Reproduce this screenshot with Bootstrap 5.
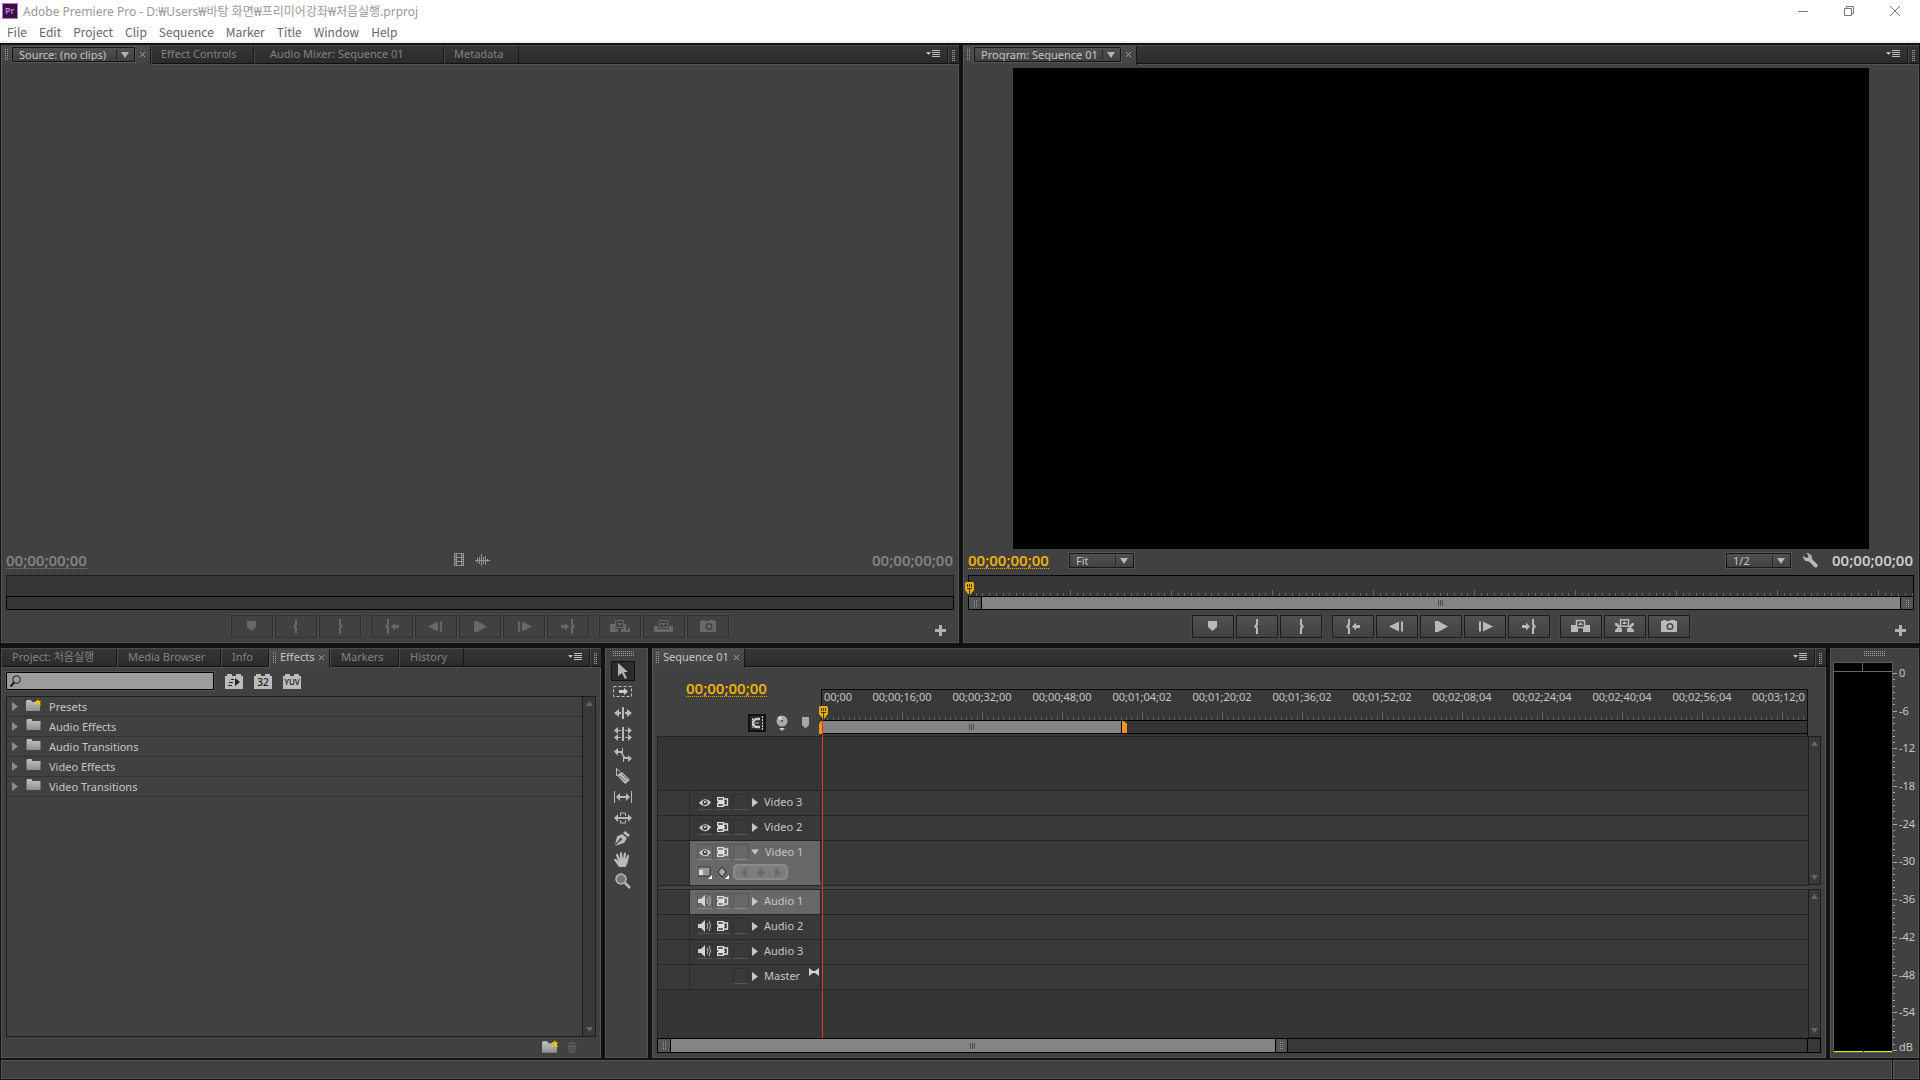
<!DOCTYPE html>
<html lang="ko">
<head>
<meta charset="utf-8">
<meta name="viewport" content="width=device-width, initial-scale=1">
<title>Adobe Premiere Pro</title>
<link rel="stylesheet" href="https://cdn.jsdelivr.net/npm/bootstrap@5.3.0/dist/css/bootstrap.min.css">
<style>
:root{--ui:#414141;--edge:#545454;--ink:#c6c6c6;--dim:#828282;--well:#363636;--gold:#f8b500}
body{background:#121212;color:var(--ink);font:11px/14px "Noto Sans","Noto Sans CJK KR",sans-serif;min-height:100vh}
svg{display:block;flex:none}
button,select,input{font:inherit;color:inherit}
.min0{min-width:0;min-height:0}
/* window chrome */
.chrome{background:#fff;color:#666;height:43px;border-bottom:2px solid #eef0ee;line-height:16px;font-size:12px}
.titlebar{height:22px;color:#999;padding:0 20px 0 2px}
.apptitle{margin:2px auto 0 5px}
.menus{height:20px;gap:12px;padding-left:7px;font-family:"Noto Sans CJK KR",sans-serif}
.menus a{color:#666;text-decoration:none}
.winbtns{gap:36px}
.winbtn{padding:0;border:0;color:#777}
/* panels */
.workspace{padding:2px 1px 1px}
.toprow{flex:598 1 0;gap:4px;margin-bottom:5px}
.botrow{flex:410 1 0;gap:4px;margin-bottom:2px}
.mon-l{flex:958 1 0}.mon-r{flex:956 1 0}
.panel{background:var(--ui);border:1px solid var(--edge);border-top-color:#4c4c4c}
.strip{height:18px;background:linear-gradient(#363636,#2a2a2a);box-shadow:inset 0 -1px #111;margin:0 -1px}
.tabx{border:0;border-radius:0;background:none;color:var(--dim);border-right:1px solid #161616;box-shadow:inset 1px 0 #484848,inset 0 -1px #111;padding:0 10px 2px;white-space:nowrap;font-size:11px;line-height:14px;text-align:left}
.fx .tabx{padding-left:11px}
.tabon{background:linear-gradient(#4c4c4c,#424242);color:var(--ink);border-right:1px solid #161616;box-shadow:inset 1px 0 #5a5a5a;height:19px;position:relative;padding:0 4px 2px;gap:4px;white-space:nowrap}
.tabon span{margin-bottom:2px}
.strip .tailgrip{border-left:1px solid #161616;width:12px;box-shadow:inset 1px 0 #484848}
.menuico{margin:0 7px 2px auto}
.body-x{border-top:1px solid #525252}
.grip{flex:none;width:3px;height:11px;background:linear-gradient(90deg,transparent 1px,#434343 1px) 0 0/2px 2px,linear-gradient(#a0a0a0 1px,transparent 1px) 0 0/2px 2px}
.grip.wide{width:21px;height:5px}
.grip.low{height:7px}
.closex{border:0;background:none;padding:0;color:#a5a5a5}
.pick{position:relative;display:block;border:1px solid #161616;outline:1px solid #555;outline-offset:0;background:linear-gradient(#505050,#414141);height:15px}
.pick select{appearance:none;border:0;border-radius:0;background:none;padding:0 0 0 6px;width:100%;height:13px;line-height:13px;display:block;color:var(--ink);outline:0}
.pick::before{content:"";position:absolute;right:17px;top:2px;bottom:2px;width:1px;background:#222}
.pick::after{content:"";position:absolute;right:5px;top:4px;border:4px solid transparent;border-top:6px solid #b4b4b4;border-bottom:0;pointer-events:none}
.pick.src{width:123px}.pick.prg{width:147px}.pick.sm{width:65px}
.tc{font-family:"Open Sans",sans-serif;font-weight:600;font-size:15px;line-height:16px;border-bottom:1px dotted transparent;white-space:nowrap}
.tc.dimt{color:#858585}.tc.dots{border-bottom-color:currentColor}.tc.gold{color:var(--gold)}.tc.lite{color:#d2d2d2}
.tc.endtc{padding:0 1px 0 2px}
.monitor{padding:0 4px 4px}
.stage{padding-top:3px;flex:1 1 0}
.frame{height:100%;aspect-ratio:16/9;background:#000}
.tcrow{height:22px;margin-bottom:4px}
.fitpick{margin:0 auto 0 20px}
.scrub{height:35px;margin-bottom:5px;position:relative}
.scrub .r1{height:22px;background:#373737;border:1px solid #1e1e1e;border-bottom-color:#000}
.scrub .r2{height:13px;border:1px solid #000;border-top:0;background:#373737}
.scrub.live .r1{border-color:#000}
.hand{flex:none;width:13px;background:#555;border-right:1px solid #000}
.hand.rt{border-right:0;border-left:1px solid #000}
.thumb{background:#848484;flex:1}
.transport{display:grid;grid-template-columns:1fr auto 1fr;height:23px}
.tbtn{width:42px;height:23px;padding:0;border:1px solid #1b1b1b;border-radius:0;background:linear-gradient(#515151,#414141);color:#b9b9b9;box-shadow:0 0 0 1px #484848;display:flex;align-items:center;justify-content:center}
.off .tbtn{background:var(--ui);border-color:#303030;color:#686868}
.grp{gap:2px}.grps{gap:10px}
.plus{border:0;background:none;padding:0;margin-right:8px;color:#b0b0b0}
.head-ph{position:absolute;left:-3px;top:7px}
/* effects */
.fx{flex:0 1 600px}.tools{flex:0 0 43px}.seq{flex:1 1 1174px}.meter{flex:0 0 89px}
.fxbar{margin-bottom:6px}
.searchbox{width:208px;height:18px;background:#9c9c9c;border:1px solid #000;outline:1px solid #505050;padding-left:3px}
.searchbox input{border:0;background:none;outline:0;width:100%;height:14px;padding:0 4px;color:#111}
.fxicons{gap:11px;margin-left:11px}
.flat{border:0;background:none;padding:0;color:#b9b9b9}
.tree{border:1px solid #1e1e1e;background:var(--ui)}
.tree li{height:20px;border-bottom:1px solid #323232;padding-left:5px}
.tree li svg:nth-child(2){margin-bottom:3px}
.vbar{width:13px;background:#393939;border-left:1px solid #1c1c1c;color:#666;padding:4px 0}
.fxfoot{height:20px;gap:8px;padding-right:18px}
.toolgrip{margin:2px 6px 5px 0}
.toolcol{margin-right:8px}
.tools .flat{width:24px;height:21px;display:flex;align-items:center;justify-content:center}
.tools .flat.sel{background:#2c2c2c;border:1px solid #111;height:20px}
/* timeline */
.gutter-l{flex:0 0 164px}
.seqtc{padding:12px 0 0 29px}
.seqicons{gap:7px;padding-right:8px}
.seqbody{padding-left:4px}
.rulerx{background:#383838;border:1px solid #0c0c0c;border-bottom:0;margin-top:21px;height:47px}
.labels{height:16px;overflow:hidden}
.labels span{flex:0 0 80px;text-align:center;white-space:nowrap}
.labels span:first-child{flex-basis:40px;text-align:left;padding-left:2px}
.labels span:last-child{flex-basis:64px;text-align:left;padding-left:10px}
.work{height:14px;border-top:1px solid #000;border-bottom:1px solid #000;background:#353535}
.workarea{flex:0 0 300px;background:#848484;border-right:1px solid #000}
.wa-in{position:absolute;left:-3px;top:31px}
.ph-seq{position:absolute;left:-3px;top:16px}
.tracks{background:#353535;border-top:1px solid #232323;border-left:1px solid #232323;position:relative}
.pane{flex:1 1 0}
.trk{height:25px;background:#393939;border-bottom:1px solid #252525;flex:none}
.trk.first{box-shadow:0 -1px #252525}
.trk.tall{height:45px}
.tgut{flex:0 0 32px;border-right:1px solid #2a2a2a}
.thead{flex:0 0 131px;border-right:1px solid #252525;padding:0 0 2px 7px;gap:2px}
.thead .cellb{margin-top:1px}
.seld .thead{width:131px;height:24px}
.seld .thead.sub{height:17px}
.arrow{margin:1px 4px 0 1px}
.arrow.dn{margin:1px 4px 0 0}
.mixico{margin:0 0 8px 7px}
.seld{background:#686868}
.cellb{width:16px;height:16px;border:1px solid #303030;border-bottom-color:#555;background:none;padding:0;color:#dcdcdc;display:flex;align-items:center;justify-content:center}
.seld .cellb{border-color:#555;border-bottom-color:#858585}
.nobox{border-color:transparent!important}
.pill{width:55px;height:16px;border-radius:5px;background:#7c7c7c;box-shadow:inset 0 0 3px 1px #969696;color:#6a6a6a}
.split{height:4px;background:#444;flex:none}
.redline{position:absolute;left:164px;top:-17px;bottom:0;width:1px;background:#e03818}
.hbar{height:15px;border:1px solid #000;background:#383838;margin-right:4px}
.hbar .thumb{flex:0 0 604px}
.hbar .hand.rt{border-right:1px solid #000}
.corner{width:13px;border-left:1px solid #000}
.vcol{flex:0 0 17px}
.vcol .vbar{border:1px solid #1c1c1c;flex:1;width:13px}
/* levels */
.levels{width:60px;background:#000;border:1px solid #5c5c5c}
.peak{height:9px;border-bottom:1px solid #666}
.peak span{border-right:1px solid #666}
.floorline{gap:1px;height:1px}
.floorline span{background:#e8e800;flex:1}
.metergrip{margin:2px 0 6px}
.meterrow{padding:0 0 4px 2px}
.scaleL{line-height:12px;margin:5px 0 0 1px}
.scaleL span:last-child{margin-top:-3px}
.status{height:19px;gap:1px}
.status div{background:#404040;border:1px solid #555}
.status .sbend{width:26px}
</style>
<script src="https://cdn.jsdelivr.net/npm/bootstrap@5.3.0/dist/js/bootstrap.bundle.min.js"></script>
</head>
<body class="d-flex flex-column m-0">
<svg width="0" height="0" class="position-absolute">
<defs>
<pattern id="tk101" width="101" height="6" patternUnits="userSpaceOnUse"><path fill="#686868" d="M0 0h1v6h-1zM7 3h1v3h-1zM13 3h1v3h-1zM20 3h1v3h-1zM27 3h1v3h-1zM34 3h1v3h-1zM40 3h1v3h-1zM47 3h1v3h-1zM54 3h1v3h-1zM61 3h1v3h-1zM67 3h1v3h-1zM74 3h1v3h-1zM81 3h1v3h-1zM88 3h1v3h-1zM94 3h1v3h-1z"/></pattern>
<pattern id="tk80" width="80" height="8" patternUnits="userSpaceOnUse"><path fill="#646464" d="M0 0h1v8h-1zM5 5h1v3h-1zM11 5h1v3h-1zM16 5h1v3h-1zM21 5h1v3h-1zM27 5h1v3h-1zM32 5h1v3h-1zM37 5h1v3h-1zM43 5h1v3h-1zM48 5h1v3h-1zM53 5h1v3h-1zM59 5h1v3h-1zM64 5h1v3h-1zM69 5h1v3h-1zM75 5h1v3h-1z"/></pattern>
<linearGradient id="gf" x2="0" y2="1"><stop stop-color="#c4c4c4"/><stop offset="1" stop-color="#8e8e8e"/></linearGradient>
</defs>
<symbol id="i-x" viewBox="0 0 7 7"><path d="M1 1l5 5M6 1l-5 5" stroke="currentColor" fill="none"/></symbol>
<symbol id="i-menu" viewBox="0 0 14 8"><path d="M0 2h5l-2.500 3zM6 0h8v1h-8zM6 2h8v1h-8zM6 4h8v1h-8zM6 6h8v1h-8z" fill="#bdbdbd"/></symbol>
<symbol id="i-mark" viewBox="0 0 20 16"><path d="M5 2h9v6l-4.500 4-4.500-4z" fill="currentColor"/></symbol>
<symbol id="i-in" viewBox="0 0 20 16"><path d="M9 0h2v6l-1 1.500 1 1.500v6h-2v-5l-2-2.500 2-2.500z" fill="currentColor"/></symbol>
<symbol id="i-out" viewBox="0 0 20 16"><path d="M11 0h-2v6l1 1.500-1 1.500v6h2v-5l2-2.500-2-2.500z" fill="currentColor"/></symbol>
<symbol id="i-goin" viewBox="0 0 20 16"><path d="M5 0h2v6l-1 1.500 1 1.500v6h-2v-5l-2-2.500 2-2.500zM9 7.500l4-4v2.500h4v3h-4v2.500z" fill="currentColor"/></symbol>
<symbol id="i-goout" viewBox="0 0 20 16"><path d="M15 0h-2v6l1 1.500-1 1.500v6h2v-5l2-2.500-2-2.500zM11 7.500l-4-4v2.500h-4v3h4v2.500z" fill="currentColor"/></symbol>
<symbol id="i-back" viewBox="0 0 20 16"><path d="M2 7.500l10-5v10zM14 2.500h2v10h-2z" fill="currentColor"/></symbol>
<symbol id="i-fwd" viewBox="0 0 20 16"><path d="M18 7.500l-10-5v10zM4 2.500h2v10h-2z" fill="currentColor"/></symbol>
<symbol id="i-play" viewBox="0 0 20 16"><path d="M4 2h3l10 5.500-10 5.500h-3z" fill="currentColor"/></symbol>
<symbol id="i-insert" viewBox="0 0 20 16"><path d="M0 5h5v5h3v3h-8zM11 10h3v-5h1l5 4v4h-9zM16 6v6l3-3z" fill="currentColor" fill-rule="evenodd"/><path d="M5.500 1.500h8v7h-8z" fill="none" stroke="currentColor"/><path d="M7 4h5l-2.500 3z" fill="currentColor"/></symbol>
<symbol id="i-over" viewBox="0 0 20 16"><path d="M0 7h4v3h11v-3h4v6h-19z" fill="currentColor"/><path d="M5.500 1.500h8v7h-8z" fill="none" stroke="currentColor"/><path d="M7 4h5l-2.500 3z" fill="currentColor"/></symbol>
<symbol id="i-lift" viewBox="0 0 20 16"><path d="M0 6h5v3h2v4h-7zM12 9h2v-3h5v7h-7z" fill="currentColor"/><path d="M5.500 1.500h8v7h-8z" fill="none" stroke="currentColor" stroke-width="1.500"/><path d="M7 6h5l-2.500-3z" fill="currentColor"/></symbol>
<symbol id="i-extract" viewBox="0 0 20 16"><path d="M0 4h2l3 3v2h2v4h-7v-2l3-2.500-3-2.500zM12 9h2v-2l3-3h2v2l-3 2.500 3 2.500v2h-7z" fill="currentColor"/><path d="M5.500 .750h8v6.500h-8z" fill="none" stroke="currentColor" stroke-width="1.500"/><path d="M7 5h5l-2.500-3z" fill="currentColor"/></symbol>
<symbol id="i-cam" viewBox="0 0 20 16"><path d="M2 2h2v-1h3v1h4v-1h5v1h2v11h-16zM11 4a3.500 3.500 0 100 7 3.500 3.500 0 000-7zM11 5.500a2 2 0 110 4 2 2 0 010-4z" fill="currentColor" fill-rule="evenodd"/></symbol>
<symbol id="i-plus" viewBox="0 0 11 11"><path d="M4 0h3v4h4v3h-4v4h-3v-4h-4v-3h4z" fill="currentColor"/></symbol>
<symbol id="i-ph" viewBox="0 0 9 13"><path d="M1 0h7l1 1v7l-4 5h-1l-4-5v-7z" fill="#e6ab0c"/><path d="M2 2h1v3h-1zM4 2h1v3h-1zM6 2h1v3h-1zM2 6h5v1h-5zM4 6h1v7h-1z" fill="#4a3400"/></symbol>
<symbol id="i-grip3" viewBox="0 0 6 6"><path d="M0 0h1v6h-1zM2 0h1v6h-1zM4 0h1v6h-1z" fill="#4d4d4d"/></symbol>
<symbol id="i-folder" viewBox="0 0 14 12"><path d="M0 1l1-1h4l1 2h8v9h-14z" fill="url(#gf)"/></symbol>
<symbol id="i-folderstar" viewBox="0 0 15 13"><path d="M0 2l1-1h4l1 2h8v9h-14z" fill="url(#gf)"/><path d="M12 0l1 2h2l-1 2 1 2.500-3-1-3 1 1-2.500-1-2h2z" fill="#f2c200"/></symbol>
<symbol id="i-tri" viewBox="0 0 6 9"><path d="M0 0l6 4.500-6 4.500z" fill="currentColor"/></symbol>
<symbol id="i-up" viewBox="0 0 7 5"><path d="M0 5h7l-3.500-5z" fill="currentColor"/></symbol>
<symbol id="i-down" viewBox="0 0 7 5"><path d="M0 0h7l-3.500 5z" fill="currentColor"/></symbol>
<symbol id="i-eye" viewBox="0 0 12 9"><path d="M0 5q6-7 12-1-5 8-12 1z" fill="#d2d2d2"/><circle cx="6" cy="4.500" r="2.600" fill="#444"/><circle cx="6" cy="4" r="1" fill="#eee"/></symbol>
<symbol id="i-sync" viewBox="0 0 12 10"><path d="M.5.500h6v3h-6zM.5 6.500h6v3h-6zM1 5h7M7 2h3.500v6h-3.500" fill="none" stroke="#dedede" stroke-width="1.300"/></symbol>
<symbol id="i-spk" viewBox="0 0 14 12"><path d="M0 4h3l4-4v12l-4-4h-3z" fill="#d2d2d2"/><path d="M9 3q2 3 0 6M11 1q3 5 0 10" stroke="#b8b8b8" fill="none"/></symbol>
</svg>

<header class="chrome">
 <div class="titlebar d-flex align-items-center">
  <svg width="16" height="16" viewBox="0 0 16 16"><rect width="16" height="16" fill="#c06ad8"/><rect x="1" y="1" width="14" height="14" fill="#35123f"/><text x="3" y="11" font-size="9" font-family="Open Sans" font-weight="600" fill="#e07cff">Pr</text></svg>
  <span class="apptitle">Adobe Premiere Pro - D:₩Users₩바탕 화면₩프리미어강좌₩처음실행.prproj</span>
  <div class="d-flex winbtns">
   <button class="btn winbtn" aria-label="Minimize"><svg width="10" height="10"><path d="M0 5.500h10" stroke="currentColor"/></svg></button>
   <button class="btn winbtn" aria-label="Restore"><svg width="10" height="10" fill="none" stroke="currentColor"><path d="M.5 2.500h7v7h-7zM2.500 2.500v-2h7v7h-2"/></svg></button>
   <button class="btn winbtn" aria-label="Close"><svg width="10" height="10" stroke="currentColor"><path d="M0 0l10 10M10 0l-10 10"/></svg></button>
  </div>
 </div>
 <nav class="menus d-flex align-items-center"><a href="#">File</a><a href="#">Edit</a><a href="#">Project</a><a href="#">Clip</a><a href="#">Sequence</a><a href="#">Marker</a><a href="#">Title</a><a href="#">Window</a><a href="#">Help</a></nav>
</header>

<main class="workspace flex-grow-1 d-flex flex-column">
 <div class="toprow d-flex min0">
  <section class="panel mon-l d-flex flex-column min0">
   <div class="strip d-flex">
    <div class="tabon d-flex align-items-center"><i class="grip"></i><label class="pick src"><select aria-label="Source clip"><option>Source: (no clips)</option></select></label><button class="closex" aria-label="Close tab"><svg width="7" height="7"><use href="#i-x"/></svg></button></div>
    <button class="btn tabx" style="width:103px">Effect Controls</button><button class="btn tabx ps-3" style="width:190px">Audio Mixer: Sequence 01</button><button class="btn tabx" style="width:75px">Metadata</button>
    <button class="flat menuico" aria-label="Panel menu"><svg width="14" height="8"><use href="#i-menu"/></svg></button>
    <div class="tailgrip d-flex align-items-center justify-content-center"><i class="grip"></i></div>
   </div>
   <div class="body-x monitor d-flex flex-column flex-grow-1 min0">
    <div class="stage min0"></div>
    <div class="tcrow d-flex align-items-center justify-content-between"><span class="tc dimt dots">00;00;00;00</span>
     <span class="d-flex align-items-center gap-2 me-3"><svg width="16" height="14" viewBox="0 0 16 14"><path d="M3 0h10v13h-10zM4 1v1h1v-1zM4 3v1h1v-1zM4 5v1h1v-1zM4 7v1h1v-1zM4 9v1h1v-1zM4 11v1h1v-1zM11 1v1h1v-1zM11 3v1h1v-1zM11 5v1h1v-1zM11 7v1h1v-1zM11 9v1h1v-1zM11 11v1h1v-1zM6 1v3h4v-3zM6 5v3h4v-3zM6 9v3h4v-3z" fill="#959595" fill-rule="evenodd"/></svg><svg width="15" height="12" viewBox="0 0 15 12"><path d="M0 6.500h15M2.500 4v5M4.500 3v7M6.500 0v12M8.500 3v7M10.500 2v9M12.500 5v3" stroke="#959595"/></svg></span>
     <span class="tc dimt endtc">00;00;00;00</span></div>
    <div class="scrub"><div class="r1"></div><div class="r2"></div></div>
    <div class="transport off"><span></span>
     <div class="d-flex grps">
      <div class="d-flex grp"><button class="btn tbtn" aria-label="Add marker"><svg width="20" height="16"><use href="#i-mark"/></svg></button><button class="btn tbtn" aria-label="Mark in"><svg width="20" height="16"><use href="#i-in"/></svg></button><button class="btn tbtn" aria-label="Mark out"><svg width="20" height="16"><use href="#i-out"/></svg></button></div>
      <div class="d-flex grp"><button class="btn tbtn" aria-label="Go to in"><svg width="20" height="16"><use href="#i-goin"/></svg></button><button class="btn tbtn" aria-label="Step back"><svg width="20" height="16"><use href="#i-back"/></svg></button><button class="btn tbtn" aria-label="Play"><svg width="20" height="16"><use href="#i-play"/></svg></button><button class="btn tbtn" aria-label="Step forward"><svg width="20" height="16"><use href="#i-fwd"/></svg></button><button class="btn tbtn" aria-label="Go to out"><svg width="20" height="16"><use href="#i-goout"/></svg></button></div>
      <div class="d-flex grp"><button class="btn tbtn" aria-label="Insert"><svg width="20" height="16"><use href="#i-insert"/></svg></button><button class="btn tbtn" aria-label="Overwrite"><svg width="20" height="16"><use href="#i-over"/></svg></button><button class="btn tbtn" aria-label="Export frame"><svg width="20" height="16"><use href="#i-cam"/></svg></button></div>
     </div>
     <div class="d-flex justify-content-end align-items-end"><button class="plus" aria-label="Button editor"><svg width="11" height="13" viewBox="0 0 11 13"><use href="#i-plus" width="11" height="11"/></svg></button></div>
    </div>
   </div>
  </section>

  <section class="panel mon-r d-flex flex-column min0">
   <div class="strip d-flex">
    <div class="tabon d-flex align-items-center"><i class="grip"></i><label class="pick prg"><select aria-label="Program sequence"><option>Program: Sequence 01</option></select></label><button class="closex" aria-label="Close tab"><svg width="7" height="7"><use href="#i-x"/></svg></button></div>
    <button class="flat menuico" aria-label="Panel menu"><svg width="14" height="8"><use href="#i-menu"/></svg></button>
    <div class="tailgrip d-flex align-items-center justify-content-center"><i class="grip"></i></div>
   </div>
   <div class="body-x monitor d-flex flex-column flex-grow-1 min0">
    <div class="stage d-flex justify-content-center min0"><div class="frame"></div></div>
    <div class="tcrow d-flex align-items-center"><span class="tc gold dots">00;00;00;00</span>
     <label class="pick sm fitpick"><select aria-label="Zoom level"><option>Fit</option></select></label>
     <label class="pick sm"><select aria-label="Playback resolution"><option>1/2</option></select></label>
     <button class="flat mx-2 px-1" aria-label="Settings"><svg width="15" height="15" viewBox="0 0 15 15"><path d="M3 0l3 .5 2.500 2 .5 3.500 5.500 5.500v2l-1 1h-1.500l-6-6-3.500-.5-2-2.500-.5-3 3 2.500 2-.5.5-2z" fill="#b8b8b8"/></svg></button>
     <span class="tc lite endtc">00;00;00;00</span></div>
    <div class="scrub live"><div class="r1 d-flex align-items-end"><svg width="100%" height="6"><rect width="100%" height="6" fill="url(#tk101)"/></svg></div>
     <div class="r2 d-flex"><span class="hand d-flex align-items-center justify-content-center"><i class="grip low"></i></span><span class="thumb d-flex align-items-center justify-content-center"><svg width="6" height="6"><use href="#i-grip3"/></svg></span><span class="hand rt d-flex align-items-center justify-content-center"><i class="grip low"></i></span></div>
     <svg class="head-ph" width="9" height="13"><use href="#i-ph"/></svg></div>
    <div class="transport"><span></span>
     <div class="d-flex grps">
      <div class="d-flex grp"><button class="btn tbtn" aria-label="Add marker"><svg width="20" height="16"><use href="#i-mark"/></svg></button><button class="btn tbtn" aria-label="Mark in"><svg width="20" height="16"><use href="#i-in"/></svg></button><button class="btn tbtn" aria-label="Mark out"><svg width="20" height="16"><use href="#i-out"/></svg></button></div>
      <div class="d-flex grp"><button class="btn tbtn" aria-label="Go to in"><svg width="20" height="16"><use href="#i-goin"/></svg></button><button class="btn tbtn" aria-label="Step back"><svg width="20" height="16"><use href="#i-back"/></svg></button><button class="btn tbtn" aria-label="Play"><svg width="20" height="16"><use href="#i-play"/></svg></button><button class="btn tbtn" aria-label="Step forward"><svg width="20" height="16"><use href="#i-fwd"/></svg></button><button class="btn tbtn" aria-label="Go to out"><svg width="20" height="16"><use href="#i-goout"/></svg></button></div>
      <div class="d-flex grp"><button class="btn tbtn" aria-label="Lift"><svg width="20" height="16"><use href="#i-lift"/></svg></button><button class="btn tbtn" aria-label="Extract"><svg width="20" height="16"><use href="#i-extract"/></svg></button><button class="btn tbtn" aria-label="Export frame"><svg width="20" height="16"><use href="#i-cam"/></svg></button></div>
     </div>
     <div class="d-flex justify-content-end align-items-end"><button class="plus" aria-label="Button editor"><svg width="11" height="13" viewBox="0 0 11 13"><use href="#i-plus" width="11" height="11"/></svg></button></div>
    </div>
   </div>
  </section>
 </div>

 <div class="botrow d-flex min0">
  <section class="panel fx d-flex flex-column min0">
   <div class="strip d-flex">
    <button class="btn tabx" style="width:116px">Project: 처음실행</button><button class="btn tabx" style="width:104px">Media Browser</button><button class="btn tabx" style="width:48px">Info</button>
    <div class="tabon d-flex align-items-center" style="width:61px"><i class="grip"></i><span class="me-auto">Effects</span><button class="closex" aria-label="Close tab"><svg width="7" height="7"><use href="#i-x"/></svg></button></div>
    <button class="btn tabx" style="width:69px">Markers</button><button class="btn tabx" style="width:65px">History</button>
    <button class="flat menuico" aria-label="Panel menu"><svg width="14" height="8"><use href="#i-menu"/></svg></button>
    <div class="tailgrip d-flex align-items-center justify-content-center"><i class="grip"></i></div>
   </div>
   <div class="body-x d-flex flex-column flex-grow-1 min0 px-1 pt-1">
    <div class="d-flex align-items-center fxbar">
     <label class="searchbox d-flex align-items-center"><svg width="11" height="12" viewBox="0 0 11 12" fill="none" stroke="#1c1c1c"><circle cx="6.500" cy="4.500" r="3.800"/><path d="M4 7.500l-3.500 4" stroke-width="2"/></svg><input type="text" aria-label="Search effects"></label>
     <div class="d-flex fxicons">
      <button class="flat" aria-label="Accelerated effects"><svg width="18" height="15" viewBox="0 0 18 15"><path d="M0 2h2v-2h5v2h4v-2h5v2h2v13h-18z" fill="#bcbcbc"/><path d="M10 4l5 4-5 4zM6 5h3v1h-3zM4 8h4v1h-4zM3 11h4v1h-4z" fill="#222"/></svg></button>
      <button class="flat" aria-label="32-bit color"><svg width="18" height="15" viewBox="0 0 18 15"><path d="M0 2h2v-2h5v2h4v-2h5v2h2v13h-18z" fill="#bcbcbc"/><text x="9" y="12" text-anchor="middle" font-size="10" font-weight="600" font-family="Open Sans" fill="#222">32</text></svg></button>
      <button class="flat" aria-label="YUV effects"><svg width="18" height="15" viewBox="0 0 18 15"><path d="M0 2h2v-2h5v2h4v-2h5v2h2v13h-18z" fill="#bcbcbc"/><text x="9" y="11" text-anchor="middle" font-size="8" font-weight="600" font-family="Open Sans" fill="#222">YUV</text></svg></button>
     </div>
    </div>
    <div class="tree d-flex flex-grow-1 min0">
     <ul class="list-unstyled m-0 flex-grow-1">
      <li class="d-flex align-items-center"><svg width="6" height="9" class="me-2" color="#8c8c8c"><use href="#i-tri"/></svg><svg width="15" height="13" class="me-2"><use href="#i-folderstar"/></svg>Presets</li>
      <li class="d-flex align-items-center"><svg width="6" height="9" class="me-2" color="#8c8c8c"><use href="#i-tri"/></svg><svg width="15" height="12" class="me-2"><use href="#i-folder"/></svg>Audio Effects</li>
      <li class="d-flex align-items-center"><svg width="6" height="9" class="me-2" color="#8c8c8c"><use href="#i-tri"/></svg><svg width="15" height="12" class="me-2"><use href="#i-folder"/></svg>Audio Transitions</li>
      <li class="d-flex align-items-center"><svg width="6" height="9" class="me-2" color="#8c8c8c"><use href="#i-tri"/></svg><svg width="15" height="12" class="me-2"><use href="#i-folder"/></svg>Video Effects</li>
      <li class="d-flex align-items-center"><svg width="6" height="9" class="me-2" color="#8c8c8c"><use href="#i-tri"/></svg><svg width="15" height="12" class="me-2"><use href="#i-folder"/></svg>Video Transitions</li>
     </ul>
     <div class="vbar d-flex flex-column justify-content-between align-items-center"><svg width="7" height="5"><use href="#i-up"/></svg><svg width="7" height="5"><use href="#i-down"/></svg></div>
    </div>
    <div class="d-flex justify-content-end align-items-center fxfoot">
     <button class="flat" aria-label="New custom bin"><svg width="16" height="14"><use href="#i-folderstar"/></svg></button>
     <button class="flat" aria-label="Delete"><svg width="12" height="12" viewBox="0 0 12 12"><path d="M1 2h3v-1h4v1h3v1h-10zM2 4h8l-1 8h-6z" fill="#5c5c5c"/><path d="M4.500 5v6M6 5v6M7.500 5v6" stroke="#444" stroke-width=".6"/></svg></button>
    </div>
   </div>
  </section>

  <section class="panel tools d-flex flex-column align-items-center">
   <i class="grip wide toolgrip"></i>
   <div class="d-flex flex-column toolcol">
    <button class="flat sel" aria-label="Selection"><svg width="10" height="16" viewBox="0 0 10 16"><path d="M0 0l10 9h-4l3 6-2 1-3-6-4 3z" fill="#b4b4b4"/></svg></button>
    <button class="flat" aria-label="Track select"><svg width="19" height="11" viewBox="0 0 19 11"><path d="M.5.500h18v10h-18z" fill="none" stroke="#c4c4c4" stroke-dasharray="3 2"/><path d="M6 4h5v-2l4 3.500-4 3.500v-2h-5z" fill="#ccc"/></svg></button>
    <button class="flat" aria-label="Ripple edit"><svg width="18" height="12" viewBox="0 0 18 12"><path d="M8 0h2v12h-2zM0 6l5-4v3h2v2h-2v3zM18 6l-5-4v3h-2v2h2v3z" fill="currentColor"/></svg></button>
    <button class="flat" aria-label="Rolling edit"><svg width="18" height="14" viewBox="0 0 18 14"><path d="M8 0h2v14h-2zM0 3.500l4-3.500v3h3v1h-3v3zM18 3.500l-4-3.500v3h-3v1h3v3zM0 10.500l4-3.500v3h3v1h-3v3zM18 10.500l-4-3.500v3h-3v1h3v3z" fill="currentColor"/></svg></button>
    <button class="flat" aria-label="Rate stretch"><svg width="18" height="14" viewBox="0 0 18 14"><path d="M0 3.500l4-3.500v3h4v-3h1v6l2 3h3v-2l4 3.500-4 3.500v-3h-4v3h-1v-5l-2-4h-3v3z" fill="currentColor"/></svg></button>
    <button class="flat" aria-label="Razor"><svg width="16" height="16" viewBox="0 0 16 16"><path d="M2 7l5-3 8 8-5 4z" fill="#b9b9b9"/><path d="M1.500 0v8M1.500 1l4 3" stroke="#b9b9b9" fill="none"/><path d="M5 8l5 5M7.500 6.500l5 5" stroke="#444" stroke-dasharray="2 1"/></svg></button>
    <button class="flat" aria-label="Slip"><svg width="18" height="12" viewBox="0 0 18 12"><path d="M0 0h1v12h-1zM17 0h1v12h-1zM2 6l4-4v3h6v-3l4 4-4 4v-3h-6v3z" fill="currentColor"/></svg></button>
    <button class="flat" aria-label="Slide"><svg width="18" height="12" viewBox="0 0 18 12"><path d="M0 6l4-4v3h10v-3l4 4-4 4v-3h-10v3z" fill="currentColor"/><path d="M6.500 4v-3h5v3M6.500 8v3h5v-3" fill="none" stroke="currentColor"/></svg></button>
    <button class="flat" aria-label="Pen"><svg width="17" height="17" viewBox="0 0 17 17"><path d="M11 1l5 4-2 2-5-4zM8 4l5 4-3 5-9 3 .5-.5 5-5a1.300 1.300 0 10-1-1l-4.500 5 2-8z" fill="currentColor"/></svg></button>
    <button class="flat" aria-label="Hand"><svg width="17" height="17" viewBox="0 0 17 17"><path d="M5 16l-5-7q0-2 2-1l2 2-2-6q0-2 2-1l2 5v-6q1-2 2 0l1 6 1-6q1-1 2 0l-.5 6 2-4q2-1 1.500 1l-1.500 7-2 4z" fill="currentColor"/></svg></button>
    <button class="flat" aria-label="Zoom"><svg width="16" height="16" viewBox="0 0 16 16"><circle cx="6" cy="6" r="5" fill="#777" stroke="#b9b9b9" stroke-width="1.500"/><path d="M10 10l5 5" stroke="#b9b9b9" stroke-width="2.500"/></svg></button>
   </div>
  </section>

  <section class="panel seq d-flex flex-column min0">
   <div class="strip d-flex">
    <div class="tabon d-flex align-items-center"><i class="grip"></i><span>Sequence 01</span><button class="closex" aria-label="Close tab"><svg width="7" height="7"><use href="#i-x"/></svg></button></div>
    <button class="flat menuico" aria-label="Panel menu"><svg width="14" height="8"><use href="#i-menu"/></svg></button>
    <div class="tailgrip d-flex align-items-center justify-content-center"><i class="grip"></i></div>
   </div>
   <div class="body-x seqbody d-flex flex-column flex-grow-1 min0 pb-1">
    <div class="d-flex">
     <div class="gutter-l d-flex flex-column pb-1 justify-content-between">
      <div class="seqtc"><span class="tc gold dots d-inline-block">00;00;00;00</span></div>
      <div class="d-flex align-items-center justify-content-end seqicons">
       <button class="flat" aria-label="Snap"><svg width="18" height="18" viewBox="0 0 18 18"><path d="M0 0h18v18h-18z" fill="#111"/><path d="M2 2h14v14h-14z" fill="#2c2c2c"/><path d="M12 5h-3a4 4 0 000 8h3" fill="none" stroke="#ccc" stroke-width="2.500"/><path d="M7 9h4" stroke="#ccc"/><path d="M4.500 4v10M14.500 2v14" stroke="#ccc" stroke-dasharray="2 1"/></svg></button>
       <button class="flat" aria-label="Set encore marker"><svg width="18" height="17" viewBox="0 0 18 17"><circle cx="9" cy="6" r="5.500" fill="#aaa"/><path d="M9 6l-4-3v-1l3-1z" fill="#ddd"/><circle cx="9" cy="6" r="1" fill="#333"/><path d="M6 13h6l-3 3z" fill="#ccc"/></svg></button>
       <button class="flat px-1" aria-label="Add marker"><svg width="7" height="12" viewBox="0 0 7 12"><path d="M0 0h7v8l-3.500 3.500-3.500-3.500z" fill="#a8a8a8"/></svg></button>
      </div>
     </div>
     <div class="rulerx flex-grow-1 min0 position-relative">
      <div class="labels d-flex"><span>00;00</span><span>00;00;16;00</span><span>00;00;32;00</span><span>00;00;48;00</span><span>00;01;04;02</span><span>00;01;20;02</span><span>00;01;36;02</span><span>00;01;52;02</span><span>00;02;08;04</span><span>00;02;24;04</span><span>00;02;40;04</span><span>00;02;56;04</span><span>00;03;12;0</span></div>
      <svg width="100%" height="14"><g transform="translate(0,6)"><rect width="100%" height="8" fill="url(#tk80)"/></g></svg>
      <div class="work d-flex"><span class="workarea d-flex align-items-center justify-content-center"><svg width="6" height="6"><use href="#i-grip3"/></svg></span><svg width="5" height="12"><path d="M0 0h2l3 3v9h-5z" fill="#f7941d"/></svg></div>
      <svg class="wa-in" width="4" height="13"><path d="M4 0h-2l-2 3v10h4z" fill="#f7941d"/></svg>
      <svg class="ph-seq" width="9" height="13"><use href="#i-ph"/></svg>
     </div>
     <div class="vcol"></div>
    </div>
    <div class="d-flex flex-grow-1 min0">
     <div class="tracks d-flex flex-column flex-grow-1 min0">
      <div class="pane d-flex flex-column justify-content-end min0">
       <div class="trk first d-flex"><div class="tgut"></div><div class="thead d-flex align-items-center"><button class="cellb" aria-label="Toggle output"><svg width="12" height="9"><use href="#i-eye"/></svg></button><button class="cellb" aria-label="Sync lock"><svg width="12" height="10"><use href="#i-sync"/></svg></button><button class="cellb" aria-label="Lock"></button><svg width="6" height="9" class="arrow"><use href="#i-tri"/></svg>Video 3</div></div>
       <div class="trk d-flex"><div class="tgut"></div><div class="thead d-flex align-items-center"><button class="cellb" aria-label="Toggle output"><svg width="12" height="9"><use href="#i-eye"/></svg></button><button class="cellb" aria-label="Sync lock"><svg width="12" height="10"><use href="#i-sync"/></svg></button><button class="cellb" aria-label="Lock"></button><svg width="6" height="9" class="arrow"><use href="#i-tri"/></svg>Video 2</div></div>
       <div class="trk tall d-flex"><div class="tgut"></div><div class="seld"><div class="thead d-flex align-items-center"><button class="cellb" aria-label="Toggle output"><svg width="12" height="9"><use href="#i-eye"/></svg></button><button class="cellb" aria-label="Sync lock"><svg width="12" height="10"><use href="#i-sync"/></svg></button><button class="cellb" aria-label="Lock"></button><svg width="8" height="6" viewBox="0 0 7 5" class="arrow dn"><use href="#i-down"/></svg>Video 1</div>
        <div class="thead sub d-flex align-items-center"><button class="cellb nobox" aria-label="Display style"><svg width="14" height="13" viewBox="0 0 14 13"><path d="M0 1h12v9h-12z" fill="#999" stroke="#333"/><path d="M1 4h4v5h-4z" fill="#ddd"/><path d="M14 9v4h-4z" fill="#fff"/></svg></button><button class="cellb nobox" aria-label="Show keyframes"><svg width="12" height="13" viewBox="0 0 12 13"><path d="M5 1l4 5-4 5-4-5z" fill="#aaa" stroke="#222"/><path d="M12 9v4h-4z" fill="#fff"/></svg></button><svg class="pill" width="55" height="16" viewBox="0 0 55 16"><path d="M14 3v11l-6-5.500zM42 3v11l6-5.500zM28 4l4 5-4 5-4-5z" fill="currentColor"/></svg></div></div></div>
      </div>
      <div class="split"></div>
      <div class="pane d-flex flex-column min0">
       <div class="trk first d-flex"><div class="tgut"></div><div class="thead seld d-flex align-items-center"><button class="cellb" aria-label="Mute"><svg width="14" height="12"><use href="#i-spk"/></svg></button><button class="cellb" aria-label="Sync lock"><svg width="12" height="10"><use href="#i-sync"/></svg></button><button class="cellb" aria-label="Lock"></button><svg width="6" height="9" class="arrow"><use href="#i-tri"/></svg>Audio 1</div></div>
       <div class="trk d-flex"><div class="tgut"></div><div class="thead d-flex align-items-center"><button class="cellb" aria-label="Mute"><svg width="14" height="12"><use href="#i-spk"/></svg></button><button class="cellb" aria-label="Sync lock"><svg width="12" height="10"><use href="#i-sync"/></svg></button><button class="cellb" aria-label="Lock"></button><svg width="6" height="9" class="arrow"><use href="#i-tri"/></svg>Audio 2</div></div>
       <div class="trk d-flex"><div class="tgut"></div><div class="thead d-flex align-items-center"><button class="cellb" aria-label="Mute"><svg width="14" height="12"><use href="#i-spk"/></svg></button><button class="cellb" aria-label="Sync lock"><svg width="12" height="10"><use href="#i-sync"/></svg></button><button class="cellb" aria-label="Lock"></button><svg width="6" height="9" class="arrow"><use href="#i-tri"/></svg>Audio 3</div></div>
       <div class="trk d-flex"><div class="tgut"></div><div class="thead d-flex align-items-center"><span class="cellb nobox"></span><span class="cellb nobox"></span><button class="cellb" aria-label="Lock"></button><svg width="6" height="9" class="arrow"><use href="#i-tri"/></svg>Master<svg class="mixico" width="10" height="8" viewBox="0 0 10 8"><path d="M0 0l4 3h2l4-3v8l-4-3h-2l-4 3z" fill="#d0d0d0"/></svg></div></div>
      </div>
      <i class="redline"></i>
     </div>
     <div class="vcol d-flex flex-column gap-1">
      <div class="vbar d-flex flex-column justify-content-between align-items-center"><svg width="7" height="5"><use href="#i-up"/></svg><svg width="7" height="5"><use href="#i-down"/></svg></div>
      <div class="vbar d-flex flex-column justify-content-between align-items-center"><svg width="7" height="5"><use href="#i-up"/></svg><svg width="7" height="5"><use href="#i-down"/></svg></div>
     </div>
    </div>
    <div class="hbar d-flex"><span class="hand d-flex align-items-center justify-content-center"><i class="grip low"></i></span><span class="thumb d-flex align-items-center justify-content-center"><svg width="6" height="6"><use href="#i-grip3"/></svg></span><span class="hand rt d-flex align-items-center justify-content-center"><i class="grip low"></i></span><span class="corner ms-auto"></span></div>
   </div>
  </section>

  <section class="panel meter d-flex flex-column align-items-center">
   <i class="grip wide metergrip"></i>
   <div class="meterrow d-flex flex-grow-1 w-100 min0">
    <div class="levels d-flex flex-column justify-content-between"><div class="peak d-flex"><span class="w-50"></span></div>
     <div class="d-flex floorline"><span></span><span></span></div></div>
    <svg id="dbticks" width="5" height="100%"></svg>
    <div class="scaleL d-flex flex-column justify-content-between"><span>0</span><span>-6</span><span>-12</span><span>-18</span><span>-24</span><span>-30</span><span>-36</span><span>-42</span><span>-48</span><span>-54</span><span>dB</span></div>
   </div>
  </section>
 </div>
 <footer class="status d-flex"><div class="flex-grow-1"></div><div class="sbend"></div></footer>
</main>
<script>
// decibel scale: eleven long ticks with five short ones between each pair
(function(){
  var s=document.getElementById('dbticks'),h=s.getBoundingClientRect().height,top=11,step=(h-top-3)/60,d='';
  for(var i=0;i<=60;i++){d+='M0 '+(Math.round(top+i*step)+.5)+'h'+(i%6?2:4);}
  s.innerHTML='<path d="'+d+'" stroke="#aaa" fill="none"/>';
})();
</script>
</body>
</html>
